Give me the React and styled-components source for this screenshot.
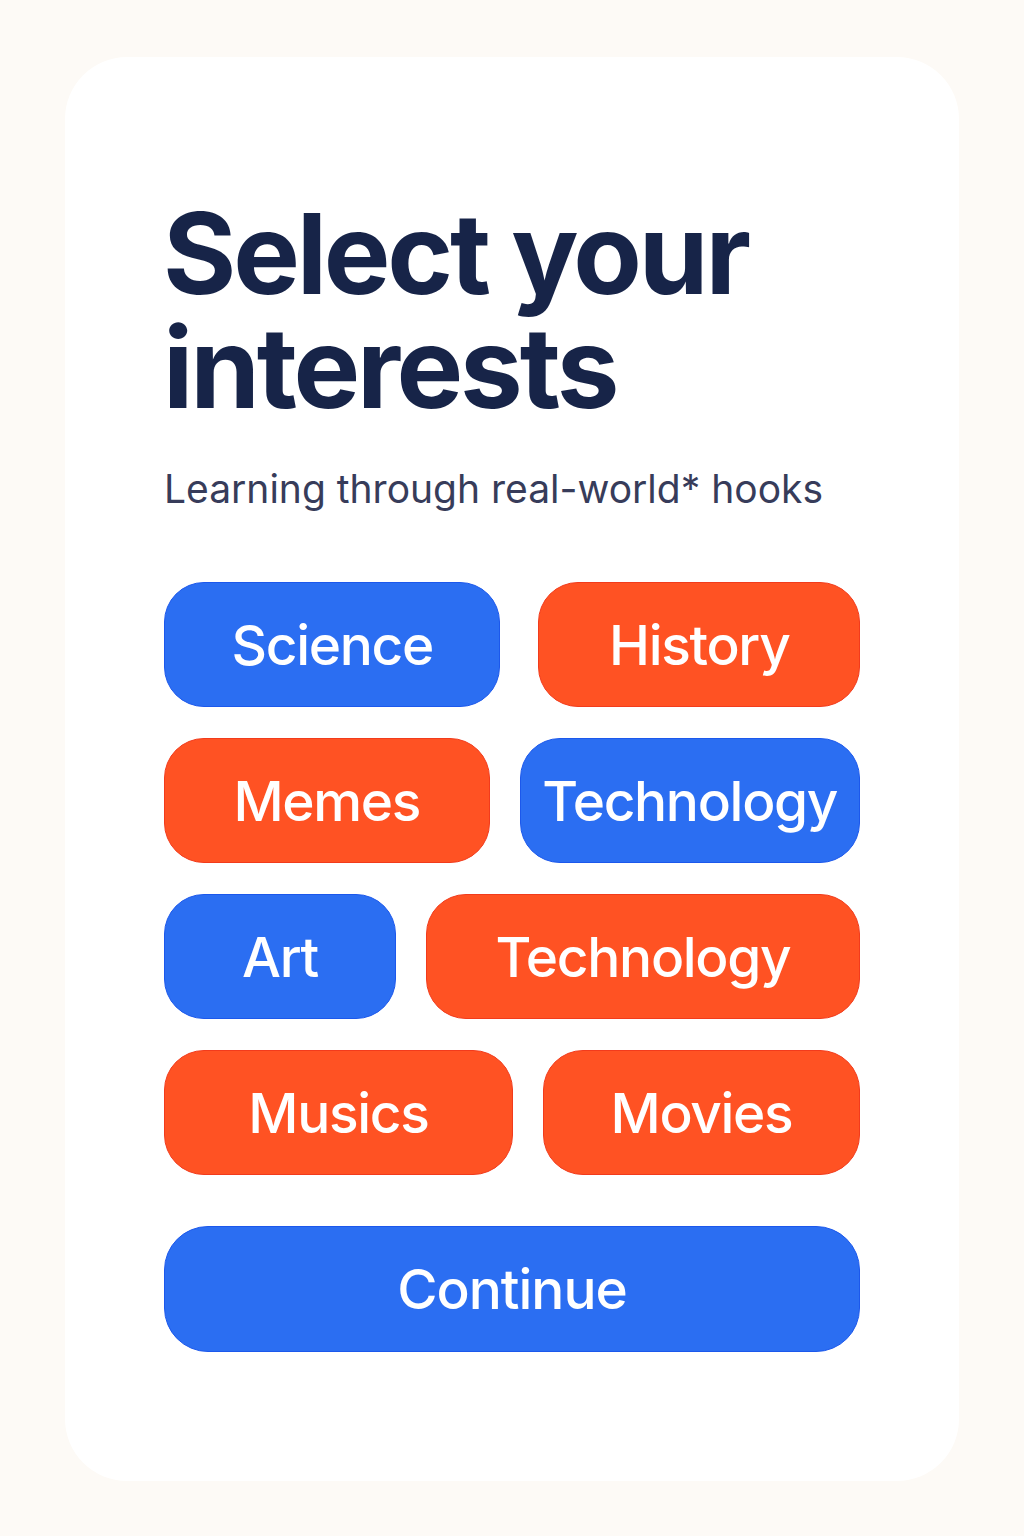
import React, { useState } from 'react';
import styled, { createGlobalStyle } from 'styled-components';

const GlobalStyle = createGlobalStyle`
  body {
    margin: 0;
    background: #fdfaf6;
    font-family: Inter, "Noto Sans", "Liberation Sans", sans-serif;
  }
`;

const rows = [
  [
    { label: 'Science', tone: 'blue', grow: 336 },
    { label: 'History', tone: 'orange', grow: 321 },
  ],
  [
    { label: 'Memes', tone: 'orange', grow: 325 },
    { label: 'Technology', tone: 'blue', grow: 340 },
  ],
  [
    { label: 'Art', tone: 'blue', grow: 231 },
    { label: 'Technology', tone: 'orange', grow: 434 },
  ],
  [
    { label: 'Musics', tone: 'orange', grow: 348 },
    { label: 'Movies', tone: 'orange', grow: 316 },
  ],
];

function App() {
  const [picked, setPicked] = useState([]);

  const toggle = (key) => {
    setPicked(picked.includes(key) ? picked.filter((k) => k !== key) : [...picked, key]);
  };

  return (
    <Page>
      <GlobalStyle />
      <Card>
        <Title>
          Select your
          <br />
          interests
        </Title>
        <Subtitle>Learning through real-world* hooks</Subtitle>
        <Chips>
          {rows.map((row, r) => (
            <ChipRow key={r} $wide={r === 0}>
              {row.map((chip, c) => {
                const key = `${r}-${c}`;
                return (
                  <Chip
                    key={key}
                    $tone={chip.tone}
                    $grow={chip.grow}
                    aria-pressed={picked.includes(key)}
                    onClick={() => toggle(key)}
                  >
                    {chip.label}
                  </Chip>
                );
              })}
            </ChipRow>
          ))}
        </Chips>
        <ContinueButton>Continue</ContinueButton>
      </Card>
    </Page>
  );
}

const colors = {
  blue: { bg: '#2b6ef2', border: '#1c58ec' },
  orange: { bg: '#ff5223', border: '#f23b1c' },
};

const Page = styled.div`
  padding: 57px 65px 56px;
`;

const Card = styled.div`
  background: #ffffff;
  border-radius: 62px;
  padding: 139px 99px 129px 99px;
  display: flex;
  flex-direction: column;
`;

const Title = styled.h1`
  margin: 0 0 0 -1px;
  font-size: 112px;
  line-height: 114px;
  font-weight: 700;
  letter-spacing: -3.2px;
  color: #172448;
`;

const Subtitle = styled.p`
  margin: 41px 0 0 0;
  font-size: 39px;
  line-height: 48px;
  font-weight: 400;
  letter-spacing: 0;
  color: #373c5a;
`;

const Chips = styled.div`
  margin-top: 69px;
  display: flex;
  flex-direction: column;
  gap: 31px;
`;

const ChipRow = styled.div`
  display: flex;
  gap: ${(p) => (p.$wide ? '38px' : '30px')};
`;

const Chip = styled.button`
  flex: ${(p) => p.$grow} 1 0;
  height: 125px;
  border-radius: 40px;
  border: 1.5px solid ${(p) => colors[p.$tone].border};
  background: ${(p) => colors[p.$tone].bg};
  color: #ffffff;
  font-family: inherit;
  font-size: 55px;
  font-weight: 500;
  letter-spacing: -1.3px;
  cursor: pointer;
  padding: 0;
`;

const ContinueButton = styled.button`
  margin-top: 51px;
  height: 126px;
  border-radius: 44px;
  border: 1.5px solid #1c58ec;
  background: #2b6ef2;
  color: #ffffff;
  font-family: inherit;
  font-size: 55px;
  font-weight: 500;
  letter-spacing: -1px;
  cursor: pointer;
`;

export default App;
